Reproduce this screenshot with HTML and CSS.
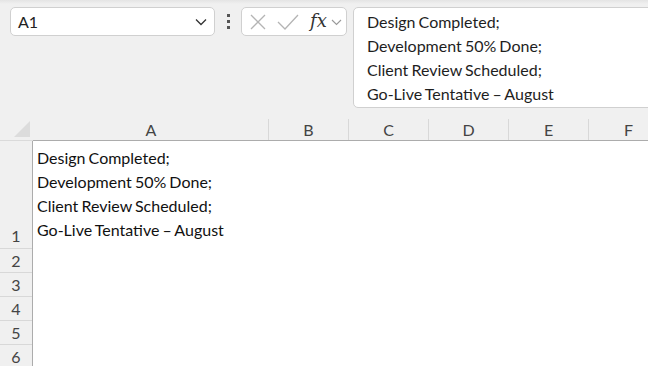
FILE: index.html
```html
<!DOCTYPE html>
<html>
<head>
<meta charset="utf-8">
<link rel="stylesheet" href="styles.css">
</head>
<body>
<div class="app">
  <div class="toolbar">
    <div class="namebox">
      <span class="ref">A1</span>
      <svg class="chev" width="12" height="8" viewBox="0 0 12 8"><path d="M1 1.5 L6 6.5 L11 1.5" fill="none" stroke="#333" stroke-width="1.3"/></svg>
    </div>
    <div class="dots"><i></i><i></i><i></i></div>
    <div class="fxbox">
      <svg class="ic-x" width="16" height="16" viewBox="0 0 16 16"><path d="M1 1 L15 15 M15 1 L1 15" stroke="#b4b4b4" stroke-width="1.3" fill="none"/></svg>
      <svg class="ic-ok" width="22" height="16" viewBox="0 0 22 16"><path d="M1 8 L8 15 L21 1" stroke="#b4b4b4" stroke-width="1.3" fill="none"/></svg>
      <span class="fx">fx</span>
      <svg class="chev-s" width="11" height="7" viewBox="0 0 11 7"><path d="M1 1 L5.5 5.5 L10 1" fill="none" stroke="#999" stroke-width="1.1"/></svg>
    </div>
    <div class="formula">
      <div>Design Completed;</div>
      <div>Development 50% Done;</div>
      <div>Client Review Scheduled;</div>
      <div>Go-Live Tentative – August</div>
    </div>
  </div>
  <div class="sheet">
    <div class="colheads">
      <div class="corner"><span class="tri"></span></div>
      <div class="ch w-a">A</div>
      <div class="ch">B</div>
      <div class="ch">C</div>
      <div class="ch">D</div>
      <div class="ch">E</div>
      <div class="ch">F</div>
    </div>
    <div class="body">
      <div class="rowheads">
        <div class="rh r1">1</div>
        <div class="rh">2</div>
        <div class="rh">3</div>
        <div class="rh">4</div>
        <div class="rh">5</div>
        <div class="rh">6</div>
      </div>
      <div class="cells">
        <div class="cell-a1">
          <div>Design Completed;</div>
          <div>Development 50% Done;</div>
          <div>Client Review Scheduled;</div>
          <div>Go-Live Tentative – August</div>
        </div>
      </div>
    </div>
  </div>
</div>
</body>
</html>
```
FILE: styles.css
```css
* { box-sizing: border-box; }
html, body { margin: 0; padding: 0; }
body {
  width: 648px;
  height: 366px;
  overflow: hidden;
  background: #f0f0f0;
  font-family: Lato, "Open Sans", sans-serif;
  color: #1e1e1e;
}
.app { width: 648px; height: 366px; overflow: hidden; }
.toolbar {
  height: 118px;
  display: flex;
  align-items: flex-start;
  padding: 7px 0 0 10px;
  background: linear-gradient(#e4e4e4 0, #f0f0f0 4px);
}
.namebox {
  width: 205px;
  height: 29px;
  flex: none;
  background: #fff;
  border: 1px solid #d0d0d0;
  border-radius: 5px;
  display: flex;
  align-items: center;
  justify-content: space-between;
  padding: 0 7px 0 7px;
}
.ref { font-size: 16px; color: #222; }
.chev { margin-top: 1px; }
.dots {
  width: 26px;
  height: 29px;
  flex: none;
  display: flex;
  flex-direction: column;
  align-items: center;
  justify-content: center;
  gap: 3px;
}
.dots i { display: block; width: 3px; height: 3px; background: #555; }
.fxbox {
  width: 106px;
  height: 29px;
  flex: none;
  background: #fff;
  border: 1px solid #d0d0d0;
  border-radius: 5px;
  display: flex;
  align-items: center;
  padding-left: 8px;
}
.ic-x { margin-right: 11px; }
.ic-ok { margin-right: 11px; }
.fx {
  font-family: "DejaVu Serif", "Liberation Serif", serif;
  font-style: italic;
  font-size: 18px;
  color: #333;
  margin-right: 4px;
  margin-top: -2px;
}
.chev-s { margin-top: 1px; }
.formula {
  margin-left: 6px;
  width: 320px;
  height: 101px;
  flex: none;
  background: #fff;
  border: 1px solid #d0d0d0;
  border-radius: 5px;
  padding: 2px 0 0 13px;
  font-size: 16px;
  line-height: 24px;
  word-spacing: -1px;
  color: #1e1e1e;
}
.sheet { background: #fff; }
.colheads {
  display: flex;
  height: 23px;
  background: #f0f0f0;
  border-bottom: 1px solid #acacac;
}
.corner {
  width: 33px;
  flex: none;
  position: relative;
  border-bottom: 1px solid #dadada;
  margin-bottom: -1px;
}
.tri {
  position: absolute;
  right: 3px;
  bottom: 3px;
  width: 0;
  height: 0;
  border-style: solid;
  border-width: 0 0 16px 16px;
  border-color: transparent transparent #dcdcdc transparent;
}
.ch {
  width: 80px;
  flex: none;
  text-align: center;
  font-size: 16px;
  line-height: 22px;
  color: #444;
  border-left: 1px solid #d8d8d8;
  margin-top: 1px;
}
.ch.w-a { width: 235px; border-left-color: transparent; }
.body { display: flex; height: 226px; }
.rowheads {
  width: 33px;
  flex: none;
  background: #f0f0f0;
  border-right: 1px solid #acacac;
}
.rh {
  height: 24px;
  border-bottom: 1px solid #d8d8d8;
  font-size: 16px;
  line-height: 24px;
  text-align: center;
  color: #444;
}
.rh.r1 {
  height: 108px;
  display: flex;
  align-items: flex-end;
  justify-content: center;
}
.cells { flex: 1; background: #fff; }
.cell-a1 {
  padding: 5px 0 0 4px;
  font-size: 16px;
  line-height: 24px;
  word-spacing: -1px;
  color: #111;
}
```
